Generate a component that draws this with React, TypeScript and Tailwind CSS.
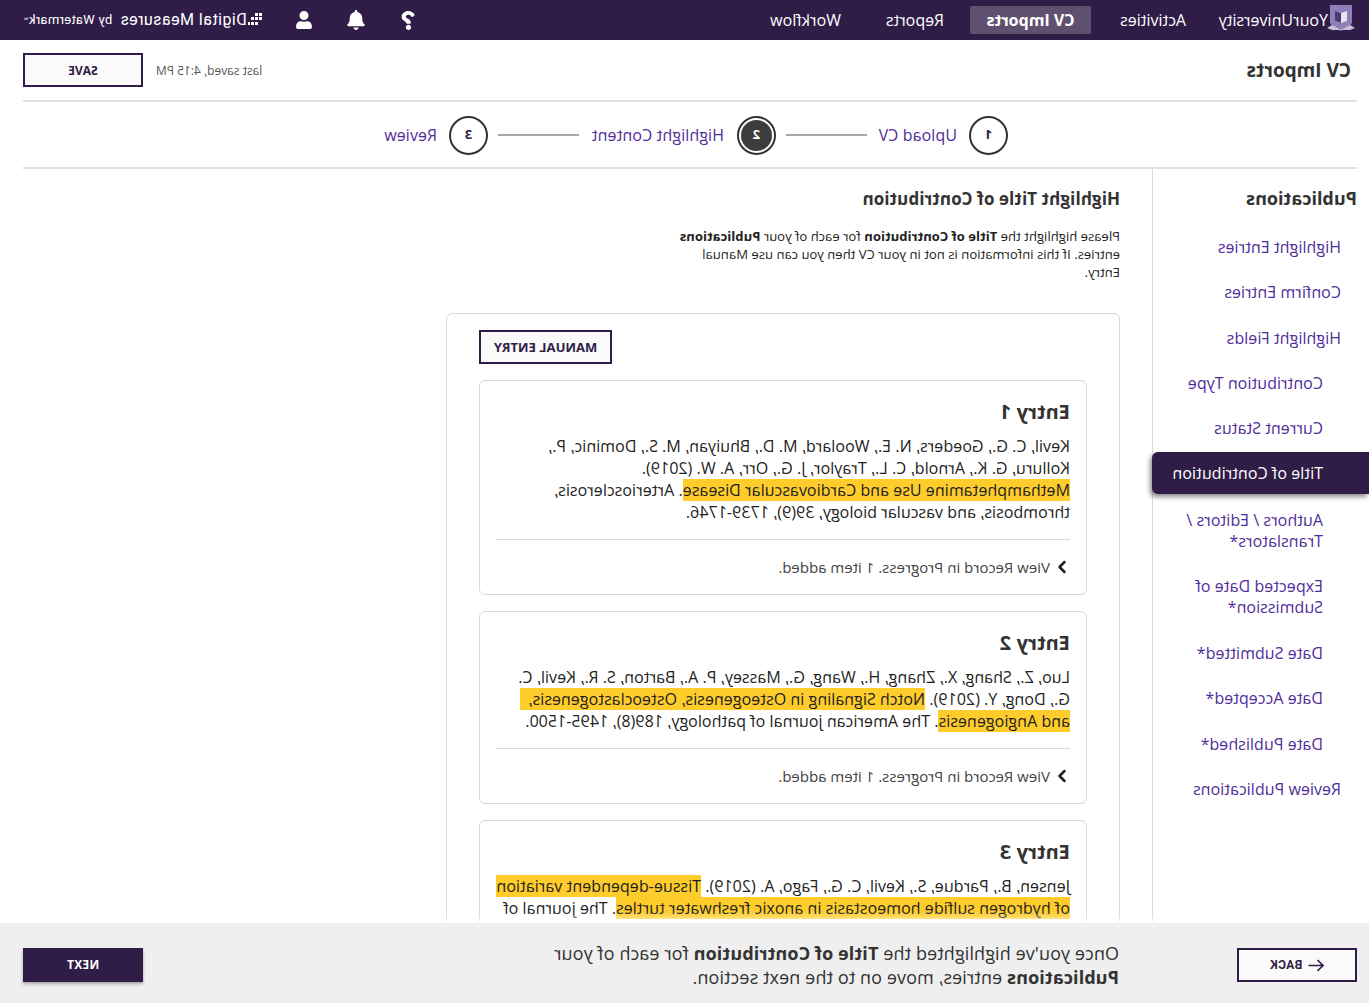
import { ChevronRight } from "lucide-react";
import { FaBell, FaQuestion, FaUser } from "react-icons/fa";

const sideItems = [
  { label: "Highlight Entries", indent: "pl-[28px]", height: "h-[45px]" },
  { label: "Confirm Entries", indent: "pl-[28px]", height: "h-[46px]" },
  { label: "Highlight Fields", indent: "pl-[28px]", height: "h-[45px]" },
  { label: "Contribution Type", indent: "pl-[46px]", height: "h-[45px]" },
  { label: "Current Status", indent: "pl-[46px]", height: "h-[45px]" },
];

const sideItemsAfter = [
  { label: "Date Submitted*", indent: "pl-[46px]", height: "h-[45px]" },
  { label: "Date Accepted*", indent: "pl-[46px]", height: "h-[46px]" },
  { label: "Date Published*", indent: "pl-[46px]", height: "h-[45px]" },
  { label: "Review Publications", indent: "pl-[28px]", height: "h-[45px]" },
];

const Mark = ({ children }: { children: React.ReactNode }) => (
  <mark className="bg-[#ffcd2b] text-[#222]">{children}</mark>
);

const ShieldLogo = () => (
  <svg width="28" height="32" viewBox="0 0 28 32" className="shrink-0">
    <path d="M3 1h22v17c0 3-5 6-11 9C8 24 3 21 3 18z" fill="#8f7fb8" />
    <path d="M0 24l5-3 9 5 9-5 5 3-5 2H5z" fill="#c9c1da" />
    <path d="M8 7l6 2 6-2v10l-6 2-6-2z" fill="#e8e4f0" />
    <path d="M14 9l6-2v10l-6 2z" fill="#4a3a78" />
  </svg>
);

const DotsLogo = () => (
  <svg width="14" height="14" viewBox="0 0 14 14" className="shrink-0" fill="#fff">
    <rect x="0" y="0" width="3" height="3" />
    <rect x="4" y="0" width="3" height="3" />
    <rect x="0" y="4" width="3" height="3" />
    <rect x="4" y="4" width="3" height="3" />
    <rect x="8" y="4" width="3" height="3" />
    <rect x="4" y="9" width="3" height="3" />
    <rect x="8" y="9" width="3" height="3" />
    <rect x="12" y="9" width="2" height="3" />
  </svg>
);

const StepCircle = ({ n, active, className }: { n: number; active?: boolean; className?: string }) =>
  active ? (
    <div className={`flex size-[39px] shrink-0 items-center justify-center rounded-full border-2 border-[#333] ${className ?? ""}`}>
      <div className="flex size-[31px] items-center justify-center rounded-full bg-[#3d3d3d] text-[13px] font-bold text-white">
        {n}
      </div>
    </div>
  ) : (
    <div className={`flex size-[39px] shrink-0 items-center justify-center rounded-full border-2 border-[#333] text-[13px] font-bold text-[#2f1d47] ${className ?? ""}`}>
      {n}
    </div>
  );

const EntryCard = ({ title, children }: { title: string; children: React.ReactNode }) => (
  <div className="rounded-[6px] border border-[#d9d9d9] px-4 pt-[18px]">
    <h3 className="text-[20px] leading-[26px] font-bold text-[#333]">{title}</h3>
    <p className="mt-[10px] text-[16px] leading-[22px] tracking-[0.05px] whitespace-nowrap text-[#222]">{children}</p>
    <div className="mt-[16px] border-t border-[#d9d9d9]" />
    <div className="ml-[-2px] flex h-[54px] items-center gap-[2px] text-[15px] text-[#444]">
      <ChevronRight size={20} strokeWidth={3} className="text-[#222]" />
      <span>View Record in Progress. 1 item added.</span>
    </div>
  </div>
);

export default function App() {
  return (
    <div className="relative h-[1003px] w-[1369px] -scale-x-100 overflow-hidden bg-white font-['Open_Sans',sans-serif] text-[#333]">
      <header className="flex h-[40px] items-center justify-between bg-[#2f1d47] pr-[24px] pl-[14px] text-white">
        <div className="flex items-center text-[16px]">
          <ShieldLogo />
          <span className="ml-[-1px] w-[142px]">YourUniversity</span>
          <span className="w-[95px]">Activities</span>
          <span className="flex h-[28px] w-[121px] items-center justify-center rounded-[2px] bg-[#5f5070] font-bold">
            CV Imports
          </span>
          <span className="ml-[26px] w-[103px]">Reports</span>
          <span>Workflow</span>
        </div>
        <div className="flex items-center">
          <FaQuestion size={19} className="mr-[33px]" />
          <FaBell size={20} className="mr-[33px]" />
          <FaUser size={18} className="mr-[33px]" />
          <DotsLogo />
          <span className="ml-[1px] font-['Roboto',sans-serif] text-[16px] tracking-[0.45px]">Digital Measures</span>
          <span className="ml-[8px] font-['Roboto',sans-serif] text-[13px] tracking-[0.3px]">by Watermark</span>
          <span className="text-[6px]">™</span>
        </div>
      </header>

      <div className="mr-[23px] ml-[12px] flex h-[62px] items-center justify-between border-b-2 border-[#e0e0e0] pl-[6px]">
        <h1 className="text-[19px] font-bold text-[#333]">CV Imports</h1>
        <div className="flex items-center gap-[13px]">
          <span className="mt-[2px] text-[12px] text-[#555]">last saved, 4:15 PM</span>
          <button className="h-[34px] w-[120px] border-2 border-[#2f1d47] bg-[#fafafa] pt-[1px] text-[12px] font-bold text-[#2f1d47]">
            SAVE
          </button>
        </div>
      </div>

      <div className="mr-[23px] ml-[12px] flex h-[67px] items-center justify-center border-b-2 border-[#e0e0e0] pt-[1px] pr-[12px] text-[16px] tracking-[0.1px] text-[#4f2d9a]">
        <StepCircle n={1} />
        <span className="ml-[12px] w-[78px] whitespace-nowrap">Upload CV</span>
        <div className="ml-[12px] w-[81px] border-t-2 border-[#a6a6a6]" />
        <StepCircle n={2} active className="ml-[10px]" />
        <span className="ml-[13px] w-[133px] whitespace-nowrap">Highlight Content</span>
        <div className="ml-[12px] w-[81px] border-t-2 border-[#a6a6a6]" />
        <StepCircle n={3} className="ml-[10px]" />
        <span className="ml-[12px] w-[53px] whitespace-nowrap">Review</span>
      </div>

      <div className="flex h-[834px] items-stretch">
        <aside className="w-[217px] shrink-0 border-r border-[#d9d9d9] pt-[17px] tracking-[0.05px] text-[#4f2d9a]">
          <h2 className="mb-[26px] pl-[12px] text-[18px] leading-[24px] font-bold tracking-normal text-[#333]">
            Publications
          </h2>
          {sideItems.map((item) => (
            <div key={item.label} className={`flex items-start text-[16px] leading-[22px] ${item.indent} ${item.height}`}>
              {item.label}
            </div>
          ))}
          <div className="mt-[-10px] mb-[16px] mr-[-1px] flex h-[42px] items-center rounded-r-[6px] bg-[#2f1d47] pl-[46px] text-[16px] text-white shadow-[2px_3px_5px_rgba(0,0,0,0.45)]">
            Title of Contribution
          </div>
          <div className="mb-[24px] pr-[6px] pl-[46px] text-[16px] leading-[21px]">Authors / Editors / Translators*</div>
          <div className="mb-[24px] pr-[6px] pl-[46px] text-[16px] leading-[21px]">Expected Date of Submission*</div>
          {sideItemsAfter.map((item) => (
            <div key={item.label} className={`flex items-start text-[16px] leading-[22px] ${item.indent} ${item.height}`}>
              {item.label}
            </div>
          ))}
        </aside>

        <main className="ml-[32px] w-[674px]">
          <h2 className="mt-[18px] text-[17px] leading-[24px] font-bold tracking-[0.1px] text-[#333]">
            Highlight Title of Contribution
          </h2>
          <p className="mt-[16px] w-[450px] text-[13px] leading-[18px] tracking-[0.05px] whitespace-nowrap text-[#222]">
            Please highlight the <b>Title of Contribution</b> for each of your <b>Publications</b>
            <br />
            entries. If this information is not in your CV then you can use Manual
            <br />
            Entry.
          </p>
          <section className="mt-[32px] rounded-[6px] border border-[#d9d9d9] px-[32px] pt-[16px] pb-[16px]">
            <div className="flex justify-end">
              <button className="h-[34px] w-[133px] border-2 border-[#2f1d47] bg-[#fafafa] pt-[1px] text-[13px] font-bold text-[#2f1d47]">
                MANUAL ENTRY
              </button>
            </div>
            <div className="mt-[16px] flex flex-col gap-[16px]">
              <EntryCard title="Entry 1">
                Kevil, C. G., Goeders, N. E., Woolard, M. D., Bhuiyan, M. S., Dominic, P.,
                <br />
                Kolluru, G. K., Arnold, C. L., Traylor, J. G., Orr, A. W. (2019).
                <br />
                <Mark>Methamphetamine Use and Cardiovascular Disease</Mark>. Arteriosclerosis,
                <br />
                thrombosis, and vascular biology, 39(9), 1739-1746.
              </EntryCard>
              <EntryCard title="Entry 2">
                Luo, Z., Shang, X., Zhang, H., Wang, G., Massey, P. A., Barton, S. R., Kevil, C.
                <br />
                G., Dong, Y. (2019). <Mark>Notch Signaling in Osteogenesis, Osteoclastogenesis,{"\u00A0\u00A0"}</Mark>
                <br />
                <Mark>and Angiogenesis</Mark>. The American journal of pathology, 189(8), 1495-1500.
              </EntryCard>
              <EntryCard title="Entry 3">
                Jensen, B., Pardue, S., Kevil, C. G., Fago, A. (2019). <Mark>Tissue-dependent variation</Mark>
                <br />
                <Mark>of hydrogen sulfide homeostasis in anoxic freshwater turtles</Mark>. The journal of
                <br />
                experimental biology, 222(11), jeb203976.
              </EntryCard>
            </div>
          </section>
        </main>
      </div>

      {/* sits on top of the scrolled content */}
      <footer className="absolute right-0 bottom-0 left-0 flex h-[80px] items-center bg-[#efefef] pt-[4px] pr-[23px] pl-[12px] shadow-[0_-4px_8px_rgba(255,255,255,0.9)]">
        <button className="flex h-[34px] w-[120px] items-center justify-center gap-[6px] border-2 border-[#2f1d47] bg-[#fafafa] font-['Roboto',sans-serif] text-[12px] font-bold tracking-[0.4px] text-[#2f1d47]">
          <svg width="16" height="13" viewBox="0 0 16 13" fill="none" stroke="#2f1d47" strokeWidth="1.6">
            <path d="M15.5 6.5H1M6.5 1L1 6.5l5.5 5.5" />
          </svg>
          BACK
        </button>
        <p className="ml-[118px] w-[600px] text-[18px] leading-[24px] tracking-[0.1px] whitespace-nowrap text-[#333]">
          Once you've highlighted the <b>Title of Contribution</b> for each of your
          <br />
          <b>Publications</b> entries, move on to the next section.
        </p>
        <button className="ml-auto h-[34px] w-[120px] bg-[#2f1d47] text-[12px] font-bold tracking-[0.2px] text-white shadow-[0_2px_3px_rgba(0,0,0,0.3)]">
          NEXT
        </button>
      </footer>
    </div>
  );
}
